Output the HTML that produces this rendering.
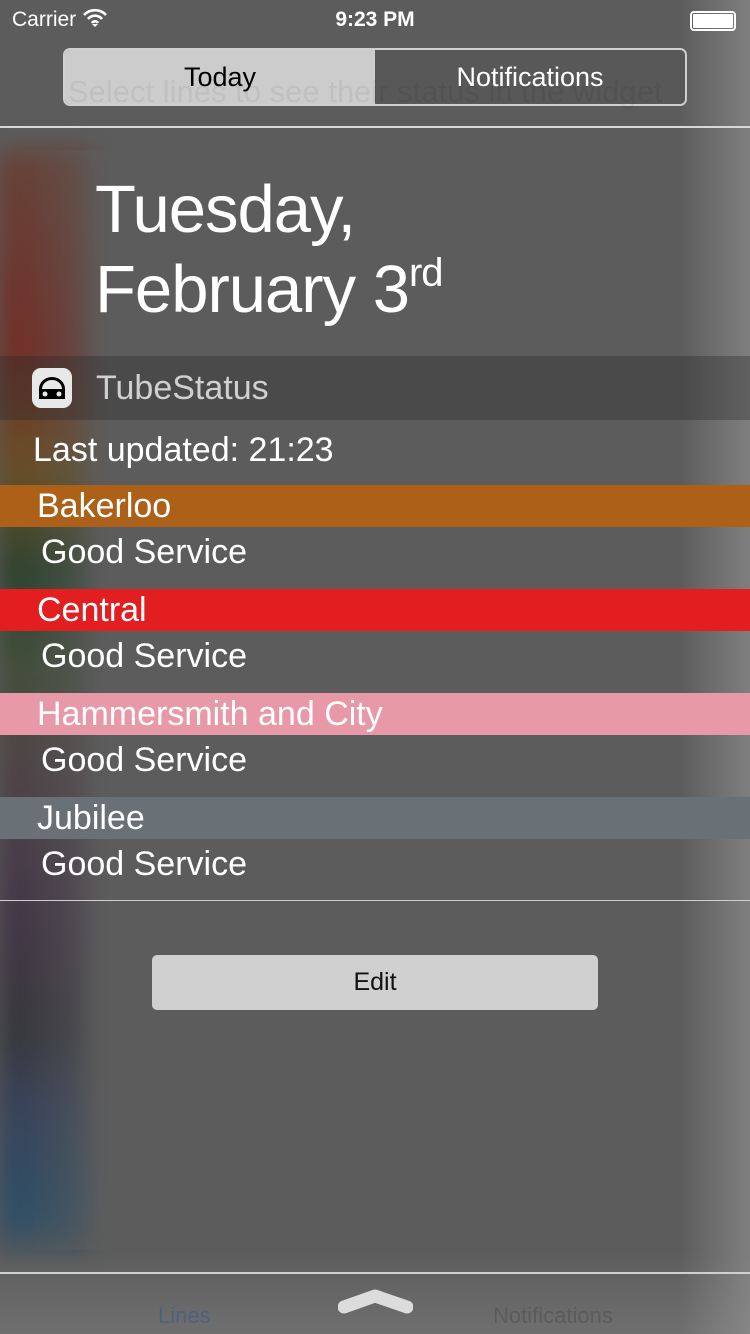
<!DOCTYPE html>
<html><head><meta charset="utf-8"><style>
*{margin:0;padding:0;box-sizing:border-box}
body{width:750px;height:1334px;overflow:hidden;background:#5c5c5c;font-family:"Liberation Sans",sans-serif;position:relative;color:#fff}
.bg{position:absolute;inset:0;background:
linear-gradient(90deg,rgba(0,0,0,0) 0,rgba(0,0,0,0) 680px,rgba(150,150,150,.6) 750px),
linear-gradient(180deg,rgba(0,0,0,0) 1250px,rgba(140,140,140,.4) 1334px)}
.lg{position:absolute;left:0;width:90px;top:150px;height:1100px;background:linear-gradient(180deg,#6a3a2a 0,#7a1e14 200px,#6d4a10 320px,#1e3a1e 420px,#3a4a30 520px,#4a3a40 620px,#3a2a40 760px,#2a2a30 880px,#2a3a5a 960px,#1e4a6a 1060px,#3a5060 1100px);filter:blur(12px);opacity:.85}
.lgm{position:absolute;left:0;width:140px;top:150px;height:1100px;background:linear-gradient(90deg,rgba(92,92,92,0),#5c5c5c)}
.abs{position:absolute}
.seg{left:63px;top:48px;width:624px;height:58px;border:2px solid #cfcfcf;border-radius:7px;overflow:hidden;display:flex;font-size:27px}
.seg div{flex:1;display:flex;align-items:center;justify-content:center}
.hr{position:absolute;left:0;width:750px;height:2px;background:#d8d8d8}
.bar{position:absolute;left:0;width:750px;height:42px;font-size:34px;padding-left:37px;line-height:42px}
.gs{position:absolute;left:41px;font-size:34px}
.ghost{position:absolute;color:rgba(0,0,0,.12);font-size:31px}
.date{position:absolute;left:95px;font-size:67px;line-height:80px;letter-spacing:-1px;white-space:nowrap}
</style></head><body>
<div class="bg"></div><div class="lg"></div><div class="lgm"></div>
<div class="abs" style="left:12px;top:8px;font-size:21px">Carrier
<svg width="26" height="20" viewBox="0 0 26 20" style="vertical-align:-2px"><path d="M2 7a15 15 0 0 1 22 0M6 11a9 9 0 0 1 14 0M10 15a3.5 3.5 0 0 1 6 0" stroke="#fff" stroke-width="2.6" fill="none"/><path d="M13 19l-3-3h6z" fill="#fff"/></svg></div>
<div class="abs" style="left:0;width:750px;top:8px;text-align:center;font-size:21px;font-weight:bold">9:23 PM</div>
<div class="abs" style="left:690px;top:11px;width:46px;height:20px;border:2px solid #fff;border-radius:4px;padding:1px"><div style="background:#fff;width:100%;height:100%;border-radius:1px"></div></div>
<div class="abs seg"><div style="background:#cccccc;color:#000">Today</div><div style="background:#585858;color:#fff">Notifications</div></div>
<div class="ghost" style="left:68px;top:74px;color:rgba(0,0,0,.06)">Select lines to see their status in the widget</div>
<div class="hr" style="top:126px"></div>
<div class="date" style="top:170px">Tuesday,</div>
<div class="date" style="top:250px">February 3<sup style="font-size:40px;vertical-align:0;position:relative;top:-26px">rd</sup></div>
<div class="abs" style="left:0;top:356px;width:750px;height:64px;background:rgba(40,40,40,.35)"></div>
<div class="abs" style="left:32px;top:368px;width:40px;height:40px;background:#e8e8e8;border-radius:9px">
<svg width="40" height="40" viewBox="0 0 40 40"><path d="M7 31V21a13 12 0 0 1 26 0v10z" fill="#000"/><path d="M10 21a10 9 0 0 1 20 0z" fill="#e8e8e8"/><circle cx="13" cy="26" r="2.5" fill="#e8e8e8"/><circle cx="27" cy="26" r="2.5" fill="#e8e8e8"/></svg></div>
<div class="abs" style="left:96px;top:369px;font-size:34px;color:#d0d0d0">TubeStatus</div>
<div class="abs" style="left:33px;top:431px;font-size:34px">Last updated: 21:23</div>
<div class="bar" style="top:485px;background:#ad6018">Bakerloo</div>
<div class="gs" style="top:533px">Good Service</div>
<div class="bar" style="top:589px;background:#e21e20">Central</div>
<div class="gs" style="top:637px">Good Service</div>
<div class="bar" style="top:693px;background:#e899a7">Hammersmith and City</div>
<div class="gs" style="top:741px">Good Service</div>
<div class="bar" style="top:797px;background:#697177">Jubilee</div>
<div class="gs" style="top:845px">Good Service</div>
<div class="hr" style="top:900px;height:1px;background:#cfcfcf"></div>
<div class="abs" style="left:152px;top:955px;width:446px;height:55px;background:#d0d0d0;border-radius:5px;color:#111;font-size:25px;text-align:center;line-height:55px">Edit</div>
<div class="hr" style="top:1272px;background:#d0d0d0"></div>
<div class="abs" style="left:158px;top:1303px;font-size:22px;color:rgba(60,90,140,.6)">Lines</div>
<div class="abs" style="left:493px;top:1303px;font-size:22px;color:rgba(0,0,0,.15)">Notifications</div>
<svg class="abs" style="left:338px;top:1288px" width="75" height="26" viewBox="0 0 75 26"><path d="M6 19L37 8L69 19" stroke="#dcdcdc" stroke-width="13" stroke-linecap="round" stroke-linejoin="round" fill="none"/></svg>
</body></html>
